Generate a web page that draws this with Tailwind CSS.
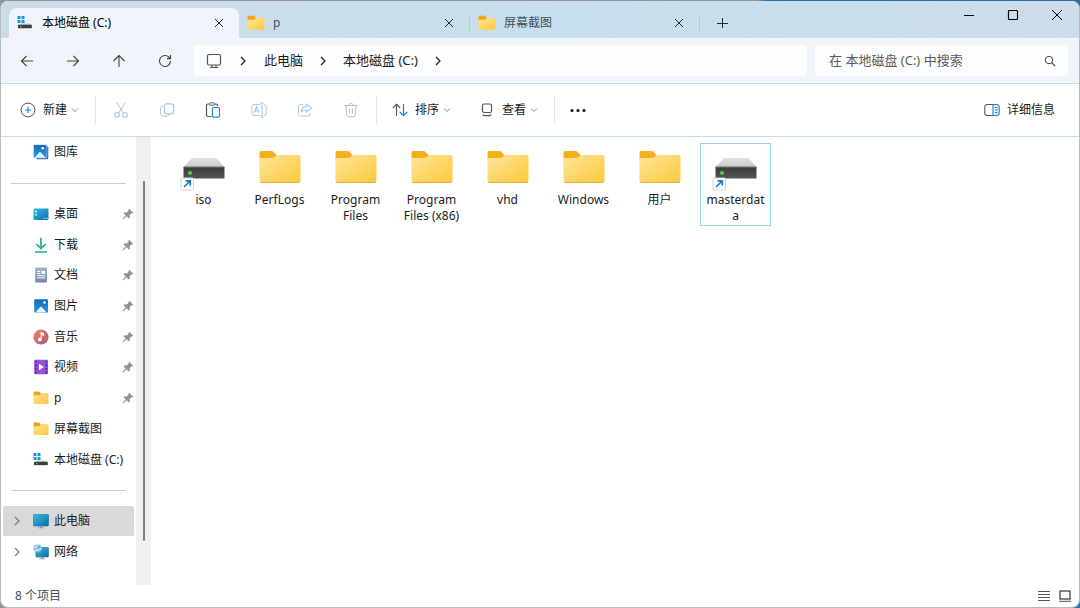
<!DOCTYPE html>
<html lang="zh-CN">

<head>
    <meta charset="UTF-8">
    <meta name="viewport" content="width=device-width, initial-scale=1.0">
    <title>本地磁盘 (C:)</title>
    <script src="https://cdn.jsdelivr.net/npm/@tailwindcss/browser@4"></script>
</head>

<body class="min-h-screen flex flex-col pt-px bg-linear-to-r from-[#8d969c] from-70% to-[#2f6da3] to-71% font-['Noto_Sans','Noto_Sans_CJK_SC',sans-serif] text-xs text-[#1b1b1b]">

    <!-- shared icons -->
    <svg class="absolute w-0 h-0" aria-hidden="true">
        <defs>
            <linearGradient id="gFolder" x1="0" y1="0" x2="1" y2="1">
                <stop offset="0" stop-color="#ffe59b" />
                <stop offset="1" stop-color="#fdc93a" />
            </linearGradient>
            <linearGradient id="gDriveTop" x1="0" y1="0" x2="0" y2="1">
                <stop offset="0" stop-color="#e2e2e2" />
                <stop offset="1" stop-color="#c9c9c9" />
            </linearGradient>
            <linearGradient id="gDrive" x1="0" y1="0" x2="0" y2="1">
                <stop offset="0" stop-color="#3a3a3a" />
                <stop offset="1" stop-color="#555" />
            </linearGradient>
            <linearGradient id="gBlue" x1="0" y1="0" x2="1" y2="1">
                <stop offset="0" stop-color="#35bfdc" />
                <stop offset="1" stop-color="#0c6ab0" />
            </linearGradient>
            <linearGradient id="gPhoto" x1="0" y1="0" x2="0" y2="1">
                <stop offset="0" stop-color="#1467b8" />
                <stop offset="1" stop-color="#2a9be0" />
            </linearGradient>
            <linearGradient id="gMusic" x1="0" y1="0" x2="1" y2="1">
                <stop offset="0" stop-color="#e98a54" />
                <stop offset="1" stop-color="#b2508f" />
            </linearGradient>
            <linearGradient id="gDoc" x1="0" y1="0" x2="0" y2="1">
                <stop offset="0" stop-color="#a3b3c9" />
                <stop offset="1" stop-color="#7489a8" />
            </linearGradient>
            <symbol id="folder" viewBox="0 0 48 48">
                <path d="M3.500 9a2 2 0 0 1 2-2h9.500c1.200 0 2 .4 2.800 1.200L20.500 11H42v6H3.500z" fill="#f3b01c" />
                <path d="M3.500 14h12.500c1.200 0 1.800-.3 2.600-1.100l1.300-1.300c.5-.5 1-.6 1.700-.6H42.500a2 2 0 0 1 2 2V37a2 2 0 0 1-2 2h-37a2 2 0 0 1-2-2z" fill="url(#gFolder)" />
                <path d="M4 38c.4.600.900 1 1.500 1h37c.6 0 1.100-.4 1.500-1z" fill="#e5ad35" />
            </symbol>
            <symbol id="folder-sm" viewBox="0 0 16 16">
                <path d="M.5 2.500c0-.6.4-1 1-1h4.200c.5 0 .8.200 1.100.5L8 3.500h6.500V7H.5z" fill="#eaa519" />
                <path d="M.5 5.200h5.200c.4 0 .7-.1 1-.4l.8-.8c.3-.3.5-.4.9-.4h6.100c.6 0 1 .4 1 1v8.400c0 .6-.4 1-1 1h-13c-.6 0-1-.4-1-1z" fill="url(#gFolder)" />
            </symbol>
            <symbol id="drive" viewBox="0 0 48 48">
                <path d="M12 14h24.500L44.500 23h-41z" fill="url(#gDriveTop)" />
                <path d="M3.500 23h41v11.500h-41z" fill="url(#gDrive)" />
                <path d="M3.500 22.500h41v1h-41z" fill="#777" />
                <circle cx="10" cy="29" r="2" fill="#3ddc3d" />
                <rect x="1" y="34" width="12.500" height="12" rx="1" fill="#fff" stroke="#d4d4d4" />
                <path d="M4 43l6-6M5.500 36.800h4.700v4.700" fill="none" stroke="#1979ca" stroke-width="1.700" />
            </symbol>
            <symbol id="disk" viewBox="0 0 16 16">
                <path d="M.5 1h3v3h-3zM4.500 1h3v3h-3zM.5 5h3v3h-3zM4.500 5h3v3h-3z" fill="#1a93dc" />
                <path d="M4 8.500h9l1.500 2H2z" fill="#c5c8ca" />
                <path d="M1 9.800h13.800v3.400H1z" fill="#3b3f42" />
                <path d="M3 11.200h1.500v1H3z" fill="#6ce06c" />
            </symbol>
            <symbol id="pin" viewBox="0 0 12 12">
                <path d="M7.200.8l4 4-.8.7-.8-.2-1.900 1.900.1 2.200-1 1-2.200-2.200L1.300 11.300l-.8.200.2-.9L3.700 7.400 1.500 5.200l1-1 2.300.2 1.900-1.900-.2-.9z" fill="#8b9598" />
            </symbol>
            <symbol id="close" viewBox="0 0 12 12">
                <path d="M2 2l8 8M10 2l-8 8" fill="none" stroke="currentColor" />
            </symbol>
            <symbol id="right" viewBox="0 0 12 12">
                <path d="M4 2l4 4-4 4" fill="none" stroke="currentColor" stroke-width="1.200" />
            </symbol>
            <symbol id="down" viewBox="0 0 8 8">
                <path d="M1 2.500l3 3 3-3" fill="none" stroke="#8c8c8c" />
            </symbol>
        </defs>
    </svg>

    <div class="flex-1 flex flex-col overflow-hidden rounded-lg border border-t-0 border-[#b4bcc2] bg-white">

        <!-- tabs -->
        <header class="flex h-[37px] pl-2 bg-linear-to-r from-[#cbdce7] via-[#c7e0ed] to-[#ccdcea] text-[#1f2a33]">
            <div class="flex items-center mt-[7px] w-[230px] pl-2 pr-2 rounded-t-lg bg-[#f0f5fb]">
                <svg class="w-4 h-4 mr-[9px]"><use href="#disk" /></svg>
                <a href="#" class="flex-1 text-black">本地磁盘 (C:)</a>
                <button aria-label="关闭标签页" class="w-6 h-6 flex items-center justify-center"><svg class="w-3 h-3"><use href="#close" /></svg></button>
            </div>
            <div class="flex items-center mt-[7px] w-[230px] pl-2 pr-2">
                <svg class="w-[18px] h-[18px] mr-2"><use href="#folder-sm" /></svg>
                <a href="#" class="flex-1 text-[#40505c]">p</a>
                <button aria-label="关闭标签页" class="w-6 h-6 flex items-center justify-center"><svg class="w-3 h-3"><use href="#close" /></svg></button>
            </div>
            <div class="w-px h-4 mt-[15px] bg-[#b9cad6]"></div>
            <div class="flex items-center mt-[7px] w-[229px] pl-2 pr-2">
                <svg class="w-[18px] h-[18px] mr-2"><use href="#folder-sm" /></svg>
                <a href="#" class="flex-1 text-[#40505c]">屏幕截图</a>
                <button aria-label="关闭标签页" class="w-6 h-6 flex items-center justify-center"><svg class="w-3 h-3"><use href="#close" /></svg></button>
            </div>
            <div class="w-px h-4 mt-[15px] bg-[#b9cad6]"></div>
            <button aria-label="新建标签页" class="mt-[7px] w-[43px] flex items-center justify-center">
                <svg class="w-3 h-3" viewBox="0 0 12 12"><path d="M6.500 1v10M1 6.500h11" fill="none" stroke="currentColor" /></svg>
            </button>
            <div class="ml-auto flex h-7 text-black">
                <button aria-label="最小化" class="w-11 flex items-center justify-center"><svg class="w-3 h-3" viewBox="0 0 12 12"><path d="M1 6.500h10" stroke="currentColor" /></svg></button>
                <button aria-label="最大化" class="w-11 flex items-center justify-center"><svg class="w-3 h-3" viewBox="0 0 12 12"><rect x="1.500" y="1.500" width="9" height="9" rx="1" fill="none" stroke="currentColor" stroke-width="1.200" /></svg></button>
                <button aria-label="关闭" class="w-11 flex items-center justify-center"><svg class="w-3 h-3" viewBox="0 0 12 12"><path d="M1 1l10 10M11 1L1 11" stroke="currentColor" /></svg></button>
            </div>
        </header>

        <!-- navigation -->
        <div class="flex items-center h-[46px] pl-[3px] pr-[11px] bg-[#eff5fa] border-b border-[#cfdbe2] text-[13px] text-[#444]">
            <button aria-label="后退" class="w-[46px] h-8 flex items-center justify-center"><svg class="w-4 h-4" viewBox="0 0 16 16"><path d="M14 8H2.500M7.500 3l-5 5 5 5" fill="none" stroke="currentColor" stroke-width="1.100" /></svg></button>
            <button aria-label="前进" class="w-[46px] h-8 flex items-center justify-center"><svg class="w-4 h-4" viewBox="0 0 16 16"><path d="M2 8h11.500M8.500 3l5 5-5 5" fill="none" stroke="currentColor" stroke-width="1.100" /></svg></button>
            <button aria-label="向上" class="w-[46px] h-8 flex items-center justify-center"><svg class="w-4 h-4" viewBox="0 0 16 16"><path d="M8 14V2.500M2.500 8L8 2.500 13.500 8" fill="none" stroke="currentColor" stroke-width="1.100" /></svg></button>
            <button aria-label="刷新" class="w-[46px] h-8 flex items-center justify-center"><svg class="w-4 h-4" viewBox="0 0 16 16"><path d="M13.500 8A5.500 5.500 0 1 1 11.800 4L13.500 5.500M13.500 2v3.600H10" fill="none" stroke="currentColor" stroke-width="1.100" /></svg></button>
            <nav aria-label="地址" class="flex-1 flex items-center h-[31px] ml-1.5 pl-3 rounded bg-[#fbfdfe] text-[#1b1b1b]">
                <svg class="w-4 h-4" viewBox="0 0 16 16"><rect x="1.500" y="1.500" width="13" height="10.500" rx="1.500" fill="none" stroke="#555" stroke-width="1.200" /><path d="M6 12v2.500M10 12v2.500M4 14.500h8" stroke="#555" stroke-width="1.200" /></svg>
                <svg class="w-3 h-3 ml-[15px] mr-[15px]"><use href="#right" /></svg>
                <a href="#">此电脑</a>
                <svg class="w-3 h-3 mx-[14px]"><use href="#right" /></svg>
                <a href="#">本地磁盘 (C:)</a>
                <svg class="w-3 h-3 mx-[14px]"><use href="#right" /></svg>
            </nav>
            <label class="flex items-center w-[253px] h-[31px] ml-2 pl-[14px] pr-3 rounded bg-[#fbfdfe]">
                <input type="search" aria-label="搜索" placeholder="在 本地磁盘 (C:) 中搜索" class="flex-1 min-w-0 outline-none bg-transparent placeholder:text-[#5c5c5c]">
                <svg class="w-3 h-3" viewBox="0 0 12 12"><circle cx="5" cy="5" r="3.700" fill="none" stroke="currentColor" /><path d="M7.700 7.700L11 11" stroke="currentColor" stroke-width="1.200" /></svg>
            </label>
        </div>

        <!-- commands -->
        <div class="flex items-center h-[53px] border-b border-[#c8dce6]">
            <button class="flex items-center h-8 pl-[19px] pr-4">
                <svg class="w-4 h-4 mr-[7px]" viewBox="0 0 16 16"><circle cx="8" cy="8" r="6.900" fill="none" stroke="#555" /><path d="M8 5v6M5 8h6" stroke="#1b86d8" stroke-width="1.200" /></svg>
                新建
                <svg class="w-2 h-2 ml-1"><use href="#down" /></svg>
            </button>
            <div class="w-px h-7 bg-[#e5e5e5]"></div>
            <div class="flex px-0.5">
                <button aria-label="剪切" class="w-[46px] h-8 flex items-center justify-center"><svg class="w-4 h-4" viewBox="0 0 16 16" fill="none"><path d="M3.800.8l6.500 10.200M12.200.8L5.700 11" stroke="#bcbcbc" /><circle cx="4" cy="12.800" r="2.300" stroke="#9ccbf0" stroke-width="1.200" /><circle cx="12" cy="12.800" r="2.300" stroke="#9ccbf0" stroke-width="1.200" /></svg></button>
                <button aria-label="复制" class="w-[46px] h-8 flex items-center justify-center"><svg class="w-4 h-4" viewBox="0 0 16 16" fill="none"><path d="M4.500 4H3.200C2.200 4 1.500 4.700 1.500 5.700v5.600c0 1.500 1.200 2.700 2.700 2.700h4c1 0 1.800-.8 1.800-1.800" stroke="#c4c4c4" /><rect x="5.500" y="1.800" width="9" height="10" rx="2" stroke="#9ccbf0" stroke-width="1.200" /></svg></button>
                <button aria-label="粘贴" class="w-[46px] h-8 flex items-center justify-center"><svg class="w-4 h-4" viewBox="0 0 16 16" fill="none"><path d="M6.500 14.500H3A1.500 1.500 0 0 1 1.500 13V3.500A1.500 1.500 0 0 1 3 2h1.500M9.500 2H11a1.500 1.500 0 0 1 1.500 1.500V4" stroke="#555" stroke-width="1.200" /><rect x="4.500" y=".8" width="5" height="2.400" rx="1" stroke="#555" /><rect x="7.500" y="5.500" width="7" height="9.700" rx="1.200" fill="#fff" stroke="#1b86d8" stroke-width="1.200" /></svg></button>
                <button aria-label="重命名" class="w-[46px] h-8 flex items-center justify-center"><svg class="w-4 h-4" viewBox="0 0 16 16" fill="none"><path d="M9 2.500H3A2.200 2.200 0 0 0 .8 4.700v6.600A2.200 2.200 0 0 0 3 13.500h6M13 2.500a2.200 2.200 0 0 1 2.200 2.200v6.600a2.200 2.200 0 0 1-2.200 2.200" stroke="#c4c4c4" /><path d="M3 11l2.500-6.500L8 11M3.900 9h3.200M11 1v14M9.300.8c1 0 1.700.2 1.700 1 0-.8.7-1 1.700-1M9.300 15.200c1 0 1.700-.2 1.700-1 0 .8.700 1 1.700 1" stroke="#9ccbf0" stroke-width="1.100" /></svg></button>
                <button aria-label="共享" class="w-[46px] h-8 flex items-center justify-center"><svg class="w-4 h-4" viewBox="0 0 16 16" fill="none"><path d="M6 2.500H3.700a2.200 2.200 0 0 0-2.200 2.200v7.100A2.200 2.200 0 0 0 3.700 14h7.100a2.200 2.200 0 0 0 2.200-2.200V11" stroke="#c4c4c4" /><path d="M9.500 1.800l5 4.200-5 4.200V7.800C7 7.700 5.400 8.500 4.200 10c.2-3.200 2-5.500 5.300-5.800z" stroke="#9ccbf0" stroke-width="1.100" stroke-linejoin="round" /></svg></button>
                <button aria-label="删除" class="w-[46px] h-8 flex items-center justify-center"><svg class="w-4 h-4" viewBox="0 0 16 16" fill="none" stroke="#bcbcbc"><path d="M1.500 3.500h13M6 3.300C6 2 6.800 1.200 8 1.200s2 .8 2 2.100M2.800 3.500l1 10c.1.800.7 1.300 1.500 1.300h5.400c.8 0 1.400-.5 1.500-1.300l1-10M6.600 6.500v5M9.400 6.500v5" /></svg></button>
            </div>
            <div class="w-px h-7 bg-[#e5e5e5]"></div>
            <button class="flex items-center h-8 pl-[15px] pr-7">
                <svg class="w-4 h-4 mr-[7px]" viewBox="0 0 16 16" fill="none"><path d="M4.500 14V2.500M.8 6l3.700-3.700L8.200 6" stroke="#555" stroke-width="1.100" /><path d="M11.500 2v11.500M7.800 10l3.700 3.700 3.700-3.700" stroke="#1b86d8" stroke-width="1.200" /></svg>
                排序
                <svg class="w-2 h-2 ml-1"><use href="#down" /></svg>
            </button>
            <button class="flex items-center h-8 pr-4">
                <svg class="w-4 h-4 mr-[7px]" viewBox="0 0 16 16" fill="none" stroke="#555" stroke-width="1.200"><rect x="3.500" y="2" width="9" height="8.500" rx="1.500" /><path d="M4 12.500c.3 1 .8 1.200 1.500 1.200h5c.7 0 1.200-.2 1.500-1.200" /></svg>
                查看
                <svg class="w-2 h-2 ml-1"><use href="#down" /></svg>
            </button>
            <div class="w-px h-7 bg-[#e5e5e5]"></div>
            <button aria-label="查看更多" class="w-[46px] h-8 flex items-center justify-center">
                <svg class="w-4 h-4" viewBox="0 0 16 16" fill="#1b1b1b"><circle cx="2" cy="8.500" r="1.600" /><circle cx="8" cy="8.500" r="1.600" /><circle cx="14" cy="8.500" r="1.600" /></svg>
            </button>
            <button class="ml-auto flex items-center h-8 pr-6">
                <svg class="w-4 h-4 mr-[7px]" viewBox="0 0 16 16" fill="none"><path d="M9 2.500H3A2.200 2.200 0 0 0 .8 4.700v6.600A2.200 2.200 0 0 0 3 13.500h6" stroke="#555" stroke-width="1.100" /><path d="M9 2.500h4a2.200 2.200 0 0 1 2.200 2.200v6.600a2.200 2.200 0 0 1-2.200 2.200H9zM11 5.500h2.500M11 8h2.500M11 10.500h2.500" fill="#e5f2fc" stroke="#1b86d8" stroke-width="1.100" /></svg>
                详细信息
            </button>
        </div>

        <div class="flex-1 flex">
            <!-- sidebar -->
            <nav aria-label="导航窗格" class="w-[135px] flex flex-col px-0.5 pb-[18px] *:flex-1 *:flex *:items-center *:min-h-7">
                <a href="#" class="pl-[30px]">
                    <svg class="w-4 h-4 mr-[5px]" viewBox="0 0 16 16"><path d="M13 2.500h1.300c.6 0 1 .4 1 1V14c0 .8-.5 1.300-1.300 1.300H3.500V14H13z" fill="#1d6fb8" /><rect x=".5" y=".7" width="13.300" height="13.300" rx="1" fill="url(#gPhoto)" stroke="#fff" stroke-width=".4" /><path d="M1.500 13.800L7 7.800l5.800 6z" fill="#e4f4ff" /><circle cx="9.800" cy="4.300" r="1.300" fill="#fff" /></svg>
                    图库
                </a>
                <div class="px-2"><hr class="flex-1 border-[#cdcdcd]"></div>
                <a href="#" class="pl-[30px]">
                    <svg class="w-4 h-4 mr-[5px]" viewBox="0 0 16 16"><rect x=".5" y="2.500" width="15" height="11.500" rx="1" fill="url(#gBlue)" /><path d="M2.200 4.800h1.600v1.600H2.200zM2.200 8h1.600v1.600H2.200z" fill="#e6fbff" /><path d="M10.500 12.300h1M12.300 12.300h1M14 12.300h.8" stroke="#bfe6fa" stroke-width="1.200" /></svg>
                    桌面
                    <svg class="w-3 h-3 ml-auto"><use href="#pin" /></svg>
                </a>
                <a href="#" class="pl-[30px]">
                    <svg class="w-4 h-4 mr-[5px]" viewBox="0 0 16 16" fill="none" stroke="#20b07f" stroke-width="1.700"><path d="M8 .8v10.500M3.300 7L8 11.500 12.700 7M2 15h12" /></svg>
                    下载
                    <svg class="w-3 h-3 ml-auto"><use href="#pin" /></svg>
                </a>
                <a href="#" class="pl-[30px]">
                    <svg class="w-4 h-4 mr-[5px]" viewBox="0 0 16 16"><rect x="2.200" y=".6" width="11.800" height="14.800" rx="1" fill="url(#gDoc)" /><path d="M4.200 4.500h3M4.200 6.500h3M4.200 8.700h7.800M4.200 10.800h7.800" stroke="#fff" /><path d="M8.500 4H12v3H8.500z" fill="#fff" /></svg>
                    文档
                    <svg class="w-3 h-3 ml-auto"><use href="#pin" /></svg>
                </a>
                <a href="#" class="pl-[30px]">
                    <svg class="w-4 h-4 mr-[5px]" viewBox="0 0 16 16"><rect x="1.200" y="1.200" width="13.800" height="13.600" rx="1" fill="url(#gPhoto)" /><path d="M2.500 14.500L7.300 9c.4-.5 1-.5 1.400 0l4.800 5.500z" fill="#f0f9ff" /><circle cx="11.500" cy="4.500" r="1.300" fill="#fff" /></svg>
                    图片
                    <svg class="w-3 h-3 ml-auto"><use href="#pin" /></svg>
                </a>
                <a href="#" class="pl-[30px]">
                    <svg class="w-4 h-4 mr-[5px]" viewBox="0 0 16 16"><circle cx="8" cy="8" r="7.600" fill="url(#gMusic)" /><path d="M8.200 3.200v6.500M8.200 3.500l2.600 1.200v1.700L8.200 5.200z" fill="#fff" stroke="#fff" /><circle cx="6.900" cy="10.500" r="1.900" fill="#fff" /></svg>
                    音乐
                    <svg class="w-3 h-3 ml-auto"><use href="#pin" /></svg>
                </a>
                <a href="#" class="pl-[30px]">
                    <svg class="w-4 h-4 mr-[5px]" viewBox="0 0 16 16"><rect x="1.200" y=".8" width="13.800" height="14.400" rx="1" fill="#9250dc" /><path d="M2.900 1.800v13M13.300 1.800v13" stroke="#4d1f8f" stroke-width="1.500" stroke-dasharray="1.800 1.800" /><path d="M6 4.800L11 8l-5 3.200z" fill="#fff" /></svg>
                    视频
                    <svg class="w-3 h-3 ml-auto"><use href="#pin" /></svg>
                </a>
                <a href="#" class="pl-[30px]">
                    <svg class="w-4 h-4 mr-[5px]"><use href="#folder-sm" /></svg>
                    p
                    <svg class="w-3 h-3 ml-auto"><use href="#pin" /></svg>
                </a>
                <a href="#" class="pl-[30px]">
                    <svg class="w-4 h-4 mr-[5px]"><use href="#folder-sm" /></svg>
                    屏幕截图
                </a>
                <a href="#" class="pl-[30px]">
                    <svg class="w-4 h-4 mr-[5px]"><use href="#disk" /></svg>
                    本地磁盘 (C:)
                </a>
                <div class="px-2"><hr class="flex-1 border-[#cdcdcd]"></div>
                <a href="#" class="pl-2 rounded-xs bg-[#d9d9d9]">
                    <svg class="w-3 h-3 mr-2.5 text-[#7a7a7a]"><use href="#right" /></svg>
                    <svg class="w-4 h-4 mr-[5px]" viewBox="0 0 16 16"><rect x=".5" y="1.500" width="15" height="11.500" rx=".8" fill="url(#gBlue)" stroke="#1a6f9c" stroke-width=".6" /><path d="M7 13h2v1.500h2v.8H5v-.8h2z" fill="#8c9ba5" /></svg>
                    此电脑
                </a>
                <a href="#" class="pl-2">
                    <svg class="w-3 h-3 mr-2.5 text-[#7a7a7a]"><use href="#right" /></svg>
                    <svg class="w-4 h-4 mr-[5px]" viewBox="0 0 16 16"><rect x="2.800" y="3.500" width="12.700" height="9.500" rx=".8" fill="url(#gBlue)" stroke="#1a6f9c" stroke-width=".6" /><path d="M8.200 13h2v1.500h2v.8h-6v-.8h2z" fill="#8c9ba5" /><circle cx="4.500" cy="4.500" r="4" fill="#7cb9d8" /><path d="M1 3.500c2 .8 2.500-.5 3.500-3M2 7.500c.5-1.800 2-2 3.200-1.600 1 .3 2-.3 3-1.800" fill="none" stroke="#e0f3fb" stroke-width="1.100" /></svg>
                    网络
                </a>
            </nav>
            <div class="w-[15px] flex justify-center pt-11 pb-11 bg-[#f0f0f0]">
                <div class="w-0.5 rounded-full bg-[#7f7f7f]"></div>
            </div>

            <!-- files -->
            <main class="flex-1 flex flex-wrap content-start items-start gap-x-[5px] gap-y-1 pl-[17px] pt-1.5 leading-4 *:w-[71px] *:pb-px *:flex *:flex-col *:items-center *:border *:border-transparent">
                <button><svg class="w-12 h-12"><use href="#drive" /></svg><span class="w-[60px] break-words">iso</span></button>
                <button><svg class="w-12 h-12"><use href="#folder" /></svg><span class="w-[60px] break-words">PerfLogs</span></button>
                <button><svg class="w-12 h-12"><use href="#folder" /></svg><span class="w-[60px] break-words">Program Files</span></button>
                <button><svg class="w-12 h-12"><use href="#folder" /></svg><span class="w-[60px] break-words">Program Files (x86)</span></button>
                <button><svg class="w-12 h-12"><use href="#folder" /></svg><span class="w-[60px] break-words">vhd</span></button>
                <button><svg class="w-12 h-12"><use href="#folder" /></svg><span class="w-[60px] break-words">Windows</span></button>
                <button><svg class="w-12 h-12"><use href="#folder" /></svg><span class="w-[60px] break-words">用户</span></button>
                <button class="border-[#99d1f0]!"><svg class="w-12 h-12"><use href="#drive" /></svg><span class="w-[60px] break-words">masterdata</span></button>
            </main>
        </div>

        <!-- status -->
        <footer class="flex items-center h-[22px] pl-[14px] pr-2 text-[#3c4f6b]">
            <span>8 个项目</span>
            <button aria-label="详细信息视图" class="ml-auto mr-[9px]"><svg class="w-3 h-3" viewBox="0 0 12 12"><path d="M0 1.500h12M0 4.500h12M0 7.500h12M0 10.500h12" stroke="#555" /></svg></button>
            <button aria-label="大图标视图"><svg class="w-3 h-3" viewBox="0 0 12 12"><rect x="1" y="1" width="10" height="8" fill="#fff" stroke="#333" stroke-width="1.200" /><path d="M0 11.300h12" stroke="#555" /></svg></button>
        </footer>
    </div>
</body>

</html>
